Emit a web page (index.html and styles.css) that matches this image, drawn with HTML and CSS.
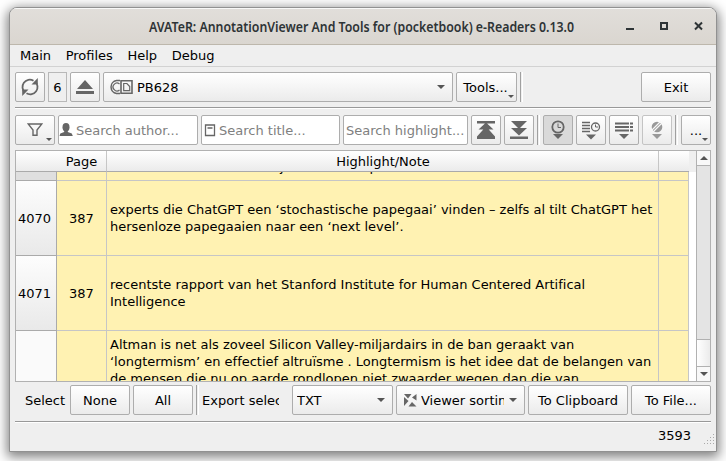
FILE: index.html
```html
<!DOCTYPE html>
<html lang="en">
<head>
<meta charset="utf-8">
<title>AVATeR</title>
<link rel="stylesheet" href="styles.css">
</head>
<body>
<main class="window">
  <header class="titlebar">
    <svg class="title" width="425" height="24"><text x="0" y="17" textLength="425" lengthAdjust="spacingAndGlyphs">AVATeR: AnnotationViewer And Tools for (pocketbook) e-Readers 0.13.0</text></svg>
    <svg class="controls" width="78" height="12" fill="none" stroke="#2e3436"><path d="M0 8h8" stroke-width="2"/><path d="M35 2h6v6h-6z" stroke-width="2"/><path d="M69 1.500l7 7M76 1.500l-7 7" stroke-width="2"/></svg>
  </header>
  <nav class="menu"><span>Main</span><span>Profiles</span><span>Help</span><span>Debug</span></nav>
  <div class="bar bar-device">
    <button class="btn w30"><svg width="18" height="20" viewBox="0 0 18 20" fill="none" stroke="#666" stroke-width="1.8"><path d="M4 15.500A7.300 7.300 0 0 1 12.500 3.700M14 4.500A7.300 7.300 0 0 1 5.500 16.300"/><path d="M16.800 1v6.500h-6.300zM1.200 19v-6.500h6.300z" fill="#666" stroke="none"/></svg></button>
    <div class="count">6</div>
    <button class="btn w30"><svg width="18" height="16" fill="#666"><path d="M9 1l8 9H1zM0 12h18v3H0z"/></svg></button>
    <div class="btn combo device">
      <svg width="24" height="16" fill="none" stroke="#666"><path d="M11 1.500H7.500a6.600 6.600 0 0 0 0 13H11" stroke-width="1.500"/><path d="M10.500 5A3.900 3.900 0 1 0 10.500 11" stroke-width="1.300"/><path d="M12 1.700h11v12.600H12z" stroke-width="1.600"/><path d="M14.700 4.500h3.200l2.800 3v4.200h-6z" stroke-width="1.200"/></svg>
      <span class="label">PB628</span><i class="arrow"></i>
    </div>
    <button class="btn tools">Tools...<i class="corner"></i></button>
    <i class="sep"></i>
    <button class="btn exit">Exit</button>
  </div>
  <div class="bar bar-search">
    <button class="btn filter"><svg width="16" height="14" fill="none" stroke="#666" stroke-width="1.4"><path d="M1.2 1h13.6L10 7v5.3H6V7z"/></svg><i class="corner"></i></button>
    <div class="field author"><svg width="14" height="14" fill="#666"><ellipse cx="7" cy="4.2" rx="3.5" ry="4.2"/><path d="M5.2 7h3.6v2l4 1.5 1 2.5H.5l.8-2.5 3.9-1.5z"/></svg><span>Search author...</span></div>
    <div class="field heading"><svg width="12" height="14" fill="none" stroke="#666" stroke-width="1.3"><path d="M1.5 2h9v10.5h-9zM3.5 5h5"/></svg><span>Search title...</span></div>
    <div class="field highlight"><span>Search highlight...</span></div>
    <button class="btn w30"><svg width="18" height="18" fill="#666"><path d="M0 0h18v2.500H0zM9 1.500l7.500 7H1.500zM9 5.500l9 10V18H0v-2.500z"/></svg></button>
    <button class="btn w30"><svg width="18" height="18" fill="#666"><path d="M0 15.500h18V18H0zM9 14.500l8-7.500H1zM9 8l8-8H1z"/></svg></button>
    <i class="sep"></i>
    <button class="btn w30 pressed"><svg width="16" height="20" fill="none" stroke="#666"><circle cx="8" cy="7" r="5.7" stroke-width="1.8"/><path d="M8 3.500V7.500h3"/><path d="M3 14h10l-5 5z" fill="#666" stroke="none"/></svg></button>
    <button class="btn w30"><svg width="20" height="20" fill="none" stroke="#666"><path d="M1 2.500h8M1 5.500h8M1 8.500h8M1 11.500h8" stroke-width="1.6"/><circle cx="14.500" cy="7" r="4" stroke-width="1.3"/><path d="M14.500 4.500V7H17"/><path d="M5 14.500h10l-5 5z" fill="#666" stroke="none"/></svg></button>
    <button class="btn w30"><svg width="20" height="20" fill="none" stroke="#666"><path d="M1 3.500h14M1 7h14M1 10.500h14M16 3.500h3M16 7h3M16 10.500h3" stroke-width="2"/><path d="M5 14h10l-5 5z" fill="#666" stroke="none"/></svg></button>
    <button class="btn w30 disabled"><svg width="16" height="20"><circle cx="8" cy="7" r="5.300" fill="#999"/><path d="M4 12L14 2M2 11L12 1" stroke="#f7f7f7" stroke-width="1.200"/><path d="M3 14h10l-5 5z" fill="#999"/></svg></button>
    <i class="sep"></i>
    <button class="btn w30">...<i class="corner"></i></button>
  </div>
  <section class="table">
    <div class="sheet">
      <div class="row head"><div class="num"></div><div class="page">Page</div><div class="note">Highlight/Note</div><div class="last"></div></div>
      <div class="row stub"><div class="num"></div><div class="page"></div><div class="note"><p><span>j</span><span>p</span></p></div><div class="last"></div></div>
      <div class="row"><div class="num">4070</div><div class="page">387</div><div class="note">experts die ChatGPT een ‘stochastische papegaai’ vinden – zelfs al tilt ChatGPT het<br>hersenloze papegaaien naar een ‘next level’.</div><div class="last"></div></div>
      <div class="row"><div class="num">4071</div><div class="page">387</div><div class="note">recentste rapport van het Stanford Institute for Human Centered Artifical<br>Intelligence</div><div class="last"></div></div>
      <div class="row cut"><div class="num"></div><div class="page"></div><div class="note">Altman is net als zoveel Silicon Valley-miljardairs in de ban geraakt van<br>‘longtermism’ en effectief altruïsme . Longtermism is het idee dat de belangen van<br>de mensen die nu op aarde rondlopen niet zwaarder wegen dan die van</div><div class="last"></div></div>
    </div>
    <div class="gutter"></div>
    <div class="scroll"><div class="step"><i class="arrow up"></i></div><div class="track"></div><div class="thumb"></div><div class="step"><i class="arrow"></i></div></div>
  </section>
  <div class="bar bar-export">
    <span class="select">Select</span>
    <button class="btn w60">None</button>
    <button class="btn w60">All</button>
    <i class="sep"></i>
    <span class="export">Export selected</span>
    <div class="btn combo format"><span class="label">TXT</span><i class="arrow"></i></div>
    <div class="btn combo sorting"><svg width="14" height="14" fill="#666"><path d="M1 1h7.500L5 5.500zM1 4l4.500 4L1 13zM13.500 1v6.500L9 4.500zM5.500 13.500L9 9l4.500 4.500z"/></svg><span class="label">Viewer sorting</span><i class="arrow"></i></div>
    <button class="btn w100">To Clipboard</button>
    <button class="btn w80">To File...</button>
  </div>
  <footer class="status"><span>3593</span><svg width="11" height="11" fill="#aaa"><path d="M9 0h1v1H9zM6 3h1v1H6zM9 3h1v1H9zM3 6h1v1H3zM6 6h1v1H6zM9 6h1v1H9zM0 9h1v1H0zM3 9h1v1H3zM6 9h1v1H6zM9 9h1v1H9z"/></svg></footer>
</main>
</body>
</html>
```
FILE: styles.css
```css
* { box-sizing: border-box; }
body { margin: 0; width: 726px; height: 461px; overflow: hidden; background: #fff; font: 13px/17px "DejaVu Sans", sans-serif; color: #000; }
.window { margin: 7px 0 0 9px; width: 708px; height: 445px; background: #efefef; border: 1px solid #919191; border-radius: 8px 8px 0 0; box-shadow: 0 3px 12px 2px rgba(0,0,0,.5); display: flex; flex-direction: column; overflow: hidden; }
.titlebar { height: 37px; flex: none; display: flex; align-items: center; padding-left: 139px; background: linear-gradient(#e1deda, #dad6d0); border-top: 1px solid #f8f8f7; border-bottom: 1px solid #bdb7ac; }
.title { font: 600 14px "Noto Sans", sans-serif; fill: #2e3436; overflow: visible; }
.controls { margin-left: 52px; }
.menu { height: 22px; flex: none; display: flex; gap: 14.600px; padding: 2px 10px 0; border-bottom: 1px solid #d2d2d2; white-space: nowrap; }
.bar { display: flex; gap: 3px; flex: none; padding: 0 5px; }
.bar-device { height: 41px; padding: 5px 0 0; margin: 0 5px; border-bottom: 1px solid #999; box-shadow: 0 1px #fff; }
.bar-search { height: 42px; padding-top: 7px; }
.bar-export { height: 40px; padding: 3px 0 0; margin: 0 5px; border-bottom: 1px solid #999; box-shadow: 0 1px #fff; }
.btn { position: relative; flex: none; height: 30px; padding: 0; font: inherit; color: #000; border: 1px solid #adadad; border-radius: 2px; background: linear-gradient(#fff, #ebebeb); display: flex; align-items: center; justify-content: center; white-space: nowrap; }
.btn svg { flex: none; }
.w30 { width: 30px; }
.w60 { width: 60px; }
.w80 { width: 80px; }
.w100 { width: 100px; }
.count { width: 19px; height: 30px; border: 1px solid #b8b8b8; display: flex; align-items: center; justify-content: center; }
.combo { justify-content: flex-start; }
.label { flex: 1; overflow: hidden; }
.arrow { width: 0; height: 0; border: 4px solid transparent; border-top-color: #555; border-bottom: 0; }
.arrow.up { border-top: 0; border-bottom: 4px solid #555; }
.corner { position: absolute; right: 2px; bottom: 3px; border: 3px solid transparent; border-top-color: #555; border-bottom: 0; }
.device { width: 350px; padding: 0 7px 0 5px; gap: 4px; }
.tools { width: 61px; padding-right: 2px; }
.sep { width: 3px; height: 30px; border-left: 1px solid #a0a0a0; border-right: 1px solid #fff; flex: none; }
.exit { width: 70px; margin-left: auto; }
.filter { width: 40px; }
.field { height: 30px; flex: none; display: flex; align-items: center; background: #fff; border: 1px solid #adadad; border-radius: 2px; color: #808080; overflow: hidden; white-space: nowrap; }
.author { width: 140px; gap: 3px; padding-left: 0; }
.heading { width: 139px; gap: 3px; padding-left: 2px; }
.highlight { width: 125px; padding-left: 2px; }
.pressed { background: #d9d9d9; }
.disabled { border-color: #c4c4c4; }
.table { height: 232px; flex: none; margin: 0 5px; border: 1px solid #b1b1b1; display: flex; overflow: hidden; background: #fff; }
.sheet { width: 673px; height: 230px; overflow: hidden; flex: none; }
.row { height: 75px; display: grid; grid-template-columns: 41px 50px 552px 30px; }
.row > div { display: flex; align-items: center; border-right: 1px solid #c6c6c6; border-bottom: 1px solid #c6c6c6; background: #fff2b2; overflow: hidden; }
.row > .num { background: linear-gradient(#fdfdfd, #e9e9e9); border-color: #aaa; padding-left: 2px; }
.row > .page { justify-content: center; }
.row > .note { padding-left: 3px; white-space: nowrap; letter-spacing: -.01px; }
.row.head { height: 21px; }
.row.head > div { background: linear-gradient(#fff, #ebebeb); border-bottom-color: #aaa; justify-content: center; }
.row.head > .note { padding: 0 0 0 1px; }
.row.head .num { border-right: 0; }
.row.head .last { border-right: 0; }
.row.stub { height: 9px; }
.row.stub > .num { background: #dfdfdf; }
.row.stub .note { align-items: flex-start; }
.stub p { margin: -14px 0 0 170px; display: flex; gap: 86px; }
.row.cut > div { align-items: flex-start; padding-top: 5px; }
.row.cut > .num { background: #fafafa; }
.gutter { width: 7px; background: linear-gradient(#efefef 0 21px, #fff 21px); }
.scroll { width: 14px; border-left: 1px solid #b1b1b1; display: flex; flex-direction: column; }
.step { height: 14px; display: flex; align-items: center; justify-content: center; background: #f8f8f8; flex: none; }
.track { flex: 1; background: #e4e4e4; border: solid #b1b1b1; border-width: 1px 0; }
.thumb { height: 27px; border-bottom: 1px solid #b1b1b1; background: linear-gradient(90deg, #fff, #ebebeb); }
.select { width: 52px; padding: 7px 0 0 10px; }
.export { width: 77px; padding-top: 7px; overflow: hidden; white-space: nowrap; margin-right: 10px; }
.format { width: 101px; padding: 0 7px 0 4px; }
.sorting { width: 129px; padding: 0 7px 0 6px; gap: 4px; }
.sorting .label { margin-right: 1px; }
.status { flex: 1; display: flex; justify-content: flex-end; padding: 5px 1px 6px 0; }
.status svg { align-self: flex-end; margin-left: 13px; }
```
